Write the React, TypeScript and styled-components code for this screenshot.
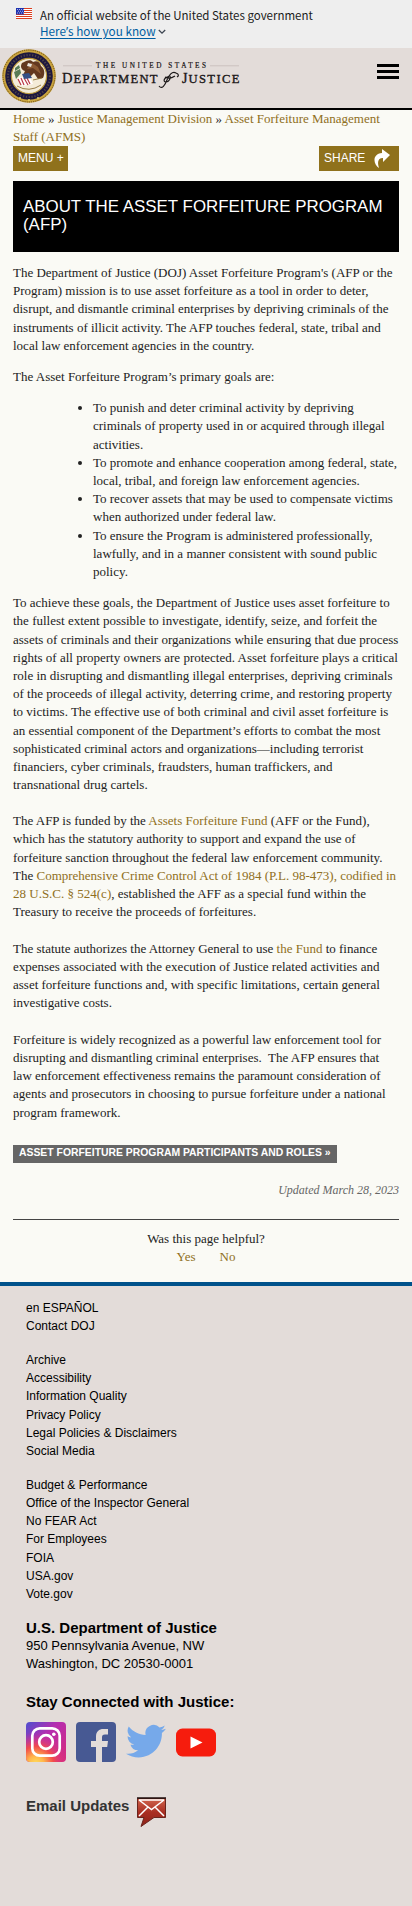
import React from 'react';
import styled, { createGlobalStyle } from 'styled-components';

const Global = createGlobalStyle`
  * { box-sizing: border-box; }
  body { margin: 0; background: #e3dcd9; color: #222; font: 13px/18.2px "Liberation Serif", serif; }
  a { color: inherit; text-decoration: none; }
  svg { display: block; }
`;

const Banner = styled.div`
  height: 48px; background: #eee; color: #1b1b1b; display: flex; padding: 7px 16px 0; gap: 8px;
  font: 11.5px/16px "Noto Sans CJK SC", sans-serif;
  svg { flex: none; margin-top: 1px; }
`;
const BannerText = styled.div` white-space: nowrap; `;
const KnowLink = styled.a`
  display: flex; align-items: center; gap: 2px; color: #005ea2 !important; font-size: 11.75px;
  span { text-decoration: underline; text-underline-offset: 2px; }
`;
const Apostrophe = styled.b` font: 12px/16px "Open Sans", sans-serif; `;
const Header = styled.header`
  height: 62px; background: #e3dcd9; border-bottom: 2px solid #000;
  display: flex; justify-content: space-between; padding: 0 13px 0 0;
`;
const Burger = styled.button`
  width: 22px; height: 15px; margin-top: 16px; padding: 0; border: 0; background: none;
  display: flex; flex-direction: column; justify-content: space-between;
  i { height: 3px; width: 100%; background: #000; }
`;
const Main = styled.main`
  height: 1172px; background: #fafaf5; padding: 0 13px;
  display: flex; flex-direction: column;
`;
const Crumbs = styled.nav` height: 36px; white-space: nowrap; `;
const Link = styled.a` && { color: #8f6f22; } `;
const Tools = styled.div` display: flex; justify-content: space-between; height: 25px; `;
const Tool = styled.button<{ $w: number }>`
  width: ${p => p.$w}px; height: 25px; border: 0; padding: 0 0 0 5px; background: #8f711c; color: #fff;
  display: flex; align-items: center; gap: 8px; font: 12px/25px "Liberation Sans", sans-serif; white-space: nowrap;
`;
const Title = styled.h1`
  margin: 10px 0 12px; height: 71px; padding: 17px 10px; background: #000; color: #fff; white-space: nowrap;
  font: 16.9px/18px "Liberation Sans", sans-serif;
`;
const Para = styled.p<{ $gap?: number }>` margin: 0 0 ${p => p.$gap ?? 13}px; white-space: nowrap; `;
const Goals = styled.ul` margin: 0 0 13px; padding: 0 0 0 80px; white-space: nowrap; `;
const Roles = styled.a`
  align-self: flex-start; margin-top: 5px; width: 324px; height: 18px; padding-left: 6px;
  background: #666; color: #fff !important; font: bold 10.4px/16px "Liberation Sans", sans-serif; white-space: nowrap;
`;
const Updated = styled.div` margin-top: 18px; text-align: right; font-style: italic; font-size: 12px; color: #666; `;
const Helpful = styled.div`
  margin-top: 20px; padding-top: 10px; border-top: 1px solid #444; text-align: center;
`;
const Answers = styled.div` display: flex; justify-content: center; gap: 24px; `;
const Footer = styled.footer`
  height: 624px; border-top: 4px solid #00528b; padding: 13px 26px 0; color: #000;
  font: 12px/18.2px "Liberation Sans", sans-serif;
`;
const Group = styled.div` margin-bottom: 15.6px; a { display: block; } &:nth-of-type(3) { margin-bottom: 15px; } `;
const Heading = styled.h2<{ $soft?: boolean }>`
  margin: 0; font-size: 15px; line-height: 19px; font-weight: bold; color: ${p => (p.$soft ? '#333' : '#000')};
`;
const Address = styled.address` font-style: normal; font-size: 13px; line-height: 18.2px; margin-bottom: 18.5px; `;
const Social = styled.div` display: flex; gap: 10px; margin-top: 11px; height: 40px; `;
const Email = styled.div` display: flex; gap: 8px; margin-top: 34px; svg { margin-top: 1px; } `;

const Flag = () => (
  <svg width="16" height="11" viewBox="0 0 16 11">
    <path fill="#fff" d="M0 0h16v11H0z" />
    <path stroke="#db3e1f" strokeWidth="1" d="M0 .5h16M0 2.5h16M0 4.5h16M0 6.5h16M0 8.5h16M0 10.5h16" />
    <path fill="#1e33b1" d="M0 0h8v6.5H0z" />
    <path stroke="#fff" strokeWidth=".8" strokeDasharray=".8 1.2" d="M1 1.5h7M2 3.2h6M1 5h7" />
  </svg>
);

const Brand = () => (
  <svg width="245" height="60" viewBox="0 0 245 60" role="img">
    <circle cx="29" cy="28" r="26.8" fill="#caa43e" />
    <circle cx="29" cy="28" r="26" fill="none" stroke="#6b4c17" strokeWidth="1" strokeDasharray="1.2 1" />
    <circle cx="29" cy="28" r="23.8" fill="#1d173f" />
    <circle cx="29" cy="28" r="21" fill="none" stroke="#8d7b4d" strokeWidth="2.2" strokeDasharray="1.2 1.7" opacity=".45" />
    <circle cx="29" cy="28" r="17.6" fill="#f4ecd8" stroke="#b99739" strokeWidth="1.2" />
    <path fill="#63381f" d="M22 15c5-3 9-4 11-1 4-2 7 0 8 4 4 3 4 8 2 12l-5 1-4-6-4 4-7-2 2-4c-4-1-5-5-3-8z" />
    <path fill="#8c5a34" d="M32 15l6 4 3 7-8-6-6 1z" />
    <path fill="#e8e4dc" d="M28 15l4 1-1 3-4-1z" />
    <path fill="#587b55" d="M14 24l6-3 1 4-5 6zM15 20l4-3 1 3-5 3z" />
    <path fill="#fff" d="M18 30l11-3 4 9-11 2z" />
    <path stroke="#ba3946" strokeWidth="1.2" d="M18 31l3 6M21 30l3 7M24 30l4 7M27 30l3 6" />
    <path fill="#344f86" d="M22 26l7-1 3 5-8 1z" />
    <path fill="none" stroke="#8d7136" strokeWidth=".9" d="M17 38q12 7 24-1M33 32l9-2" />
    <g fill="#e6cc63"><circle cx="20" cy="50" r="1" /><circle cx="29" cy="52" r="1.1" /><circle cx="38" cy="50" r="1" /></g>
    <path stroke="#c0b6b3" strokeWidth=".7" d="M63 17.8h29M210 17.8h29" />
    <g fill="#1b1718" fontFamily="Liberation Serif, serif">
      <text x="96" y="20.3" fontSize="7.2" textLength="110" stroke="#1b1718" strokeWidth=".2">THE UNITED STATES</text>
      <g stroke="#1b1718" strokeWidth=".35">
        <text x="62" y="35" fontSize="14.5" textLength="10">D</text>
        <text x="73.5" y="35" fontSize="12.6" textLength="84">EPARTMENT</text>
        <text x="182" y="35" fontSize="14">J</text>
        <text x="188.5" y="35" fontSize="12.6" textLength="51">USTICE</text>
      </g>
    </g>
    <path fill="none" stroke="#1b1718" strokeWidth="1.2" d="M169 29c-4-1-7 5-3 5 3 0 5-4 4-6M159 38c3 4 6-1 8-6s5-9 9-7c3 1 3 3 1 4M165 29c3 2 7 1 10-1" />
  </svg>
);

const ShareIcon = () => (
  <svg width="18" height="19" viewBox="0 0 18 19">
    <path fill="#fff" d="M9 0l8 6-7 7V9C5 9 4 13 6 19 0 15-1 5 9 4z" />
  </svg>
);

const Instagram = () => (
  <svg width="40" height="40" viewBox="0 0 40 40">
    <defs>
      <linearGradient id="igBase" x1="0" y1="0" x2="1" y2="1">
        <stop offset="0" stopColor="#4c4fd0" /><stop offset=".4" stopColor="#b52db0" /><stop offset="1" stopColor="#d92b78" />
      </linearGradient>
      <radialGradient id="igGlow" cx=".25" cy="1.05" r=".8">
        <stop offset="0" stopColor="#ffe05c" /><stop offset=".25" stopColor="#ffb64b" /><stop offset=".55" stopColor="#f24b4b" /><stop offset="1" stopColor="#d02c9a" stopOpacity="0" />
      </radialGradient>
    </defs>
    <rect width="40" height="40" rx="4" fill="url(#igBase)" />
    <rect width="40" height="40" rx="4" fill="url(#igGlow)" />
    <g fill="none" stroke="#fff" strokeWidth="2.7">
      <rect x="6.3" y="6.3" width="27.4" height="27.4" rx="7.5" /><circle cx="20" cy="20" r="6.8" />
    </g>
    <circle cx="27.8" cy="12.2" r="1.8" fill="#fff" />
  </svg>
);
const Facebook = () => (
  <svg width="40" height="40" viewBox="0 0 40 40">
    <rect width="40" height="40" rx="4" fill="#475993" />
    <path fill="#e3dcd9" d="M20 40V25h-5v-6h5v-4.5C20 9.5 23 7 27.5 7H32v5.5h-3c-2.4 0-3 1.2-3 3V19h6l-.8 6H26v15z" />
  </svg>
);
const Twitter = () => (
  <svg width="40" height="40" viewBox="0 3 24 19">
    <path fill="#76a9ea" d="M23.95 4.57a10 10 0 0 1-2.82.78 4.96 4.96 0 0 0 2.16-2.73c-.95.56-2 .96-3.13 1.19a4.92 4.92 0 0 0-8.38 4.48C7.69 8.09 4.07 6.13 1.64 3.16a4.92 4.92 0 0 0 1.52 6.57 4.9 4.9 0 0 1-2.23-.61v.06a4.92 4.92 0 0 0 3.95 4.83 5 5 0 0 1-2.21.08 4.94 4.94 0 0 0 4.6 3.42A9.87 9.87 0 0 1 0 19.54a14 14 0 0 0 7.55 2.21c9.05 0 14-7.5 14-13.98 0-.21 0-.42-.02-.63a9.94 9.94 0 0 0 2.42-2.57z" />
  </svg>
);
const Youtube = () => (
  <svg width="40" height="40" viewBox="0 0 40 40">
    <rect y="6.5" width="40" height="28" rx="6.5" fill="#f61c0d" />
    <path fill="#fff" d="M14.500 14.500v12l12-6z" />
  </svg>
);
const Mail = () => (
  <svg width="30" height="31" viewBox="0 0 30 31">
    <defs>
      <linearGradient id="mailRed" x1="0" y1="0" x2="0" y2="1">
        <stop offset="0" stopColor="#d0654e" /><stop offset=".5" stopColor="#a92e22" /><stop offset="1" stopColor="#8c2118" />
      </linearGradient>
    </defs>
    <path fill="url(#mailRed)" stroke="#69251e" d="M.5 1.5h28v19H17L4 29.5l3-9H.5z" />
    <path stroke="#1f0f0e" strokeWidth="1.5" d="M0 1h29" />
    <path fill="none" stroke="#fff" strokeWidth="1.5" d="M2 3l12.5 9.5L27 3M2 19l9-9M27 19l-9-9M2 3h25" />
  </svg>
);

const groups = [
  ['en ESPAÑOL', 'Contact DOJ'],
  ['Archive', 'Accessibility', 'Information Quality', 'Privacy Policy', 'Legal Policies & Disclaimers', 'Social Media'],
  ['Budget & Performance', 'Office of the Inspector General', 'No FEAR Act', 'For Employees', 'FOIA', 'USA.gov', 'Vote.gov'],
];

export default function App() {
  return (
    <>
      <Global />
      <Banner>
        <Flag />
        <BannerText>
          An official website of the United States government
          <KnowLink href="#">
            <span>Here<Apostrophe>’</Apostrophe>s how you know</span>
            <svg width="8" height="6" viewBox="0 0 8 6"><path d="M.8 1l3.2 3.2L7.2 1" fill="none" stroke="#3d4551" strokeWidth="1.3" /></svg>
          </KnowLink>
        </BannerText>
      </Banner>
      <Header>
        <Brand />
        <Burger aria-label="Menu"><i /><i /><i /></Burger>
      </Header>
      <Main>
        <Crumbs>
          <Link href="#">Home</Link> » <Link href="#">Justice Management Division</Link> » <Link href="#">Asset Forfeiture Management<br />Staff (AFMS)</Link>
        </Crumbs>
        <Tools>
          <Tool $w={55}>MENU +</Tool>
          <Tool $w={80}>SHARE <ShareIcon /></Tool>
        </Tools>
        <Title>ABOUT THE ASSET FORFEITURE PROGRAM<br />(AFP)</Title>
        <Para>
          The Department of Justice (DOJ) Asset Forfeiture Program's (AFP or the<br />
          Program) mission is to use asset forfeiture as a tool in order to deter,<br />
          disrupt, and dismantle criminal enterprises by depriving criminals of the<br />
          instruments of illicit activity. The AFP touches federal, state, tribal and<br />
          local law enforcement agencies in the country.
        </Para>
        <Para>The Asset Forfeiture Program’s primary goals are:</Para>
        <Goals>
          <li>To punish and deter criminal activity by depriving<br />criminals of property used in or acquired through illegal<br />activities.</li>
          <li>To promote and enhance cooperation among federal, state,<br />local, tribal, and foreign law enforcement agencies.</li>
          <li>To recover assets that may be used to compensate victims<br />when authorized under federal law.</li>
          <li>To ensure the Program is administered professionally,<br />lawfully, and in a manner consistent with sound public<br />policy.</li>
        </Goals>
        <Para $gap={17.8}>
          To achieve these goals, the Department of Justice uses asset forfeiture to<br />
          the fullest extent possible to investigate, identify, seize, and forfeit the<br />
          assets of criminals and their organizations while ensuring that due process<br />
          rights of all property owners are protected. Asset forfeiture plays a critical<br />
          role in disrupting and dismantling illegal enterprises, depriving criminals<br />
          of the proceeds of illegal activity, deterring crime, and restoring property<br />
          to victims. The effective use of both criminal and civil asset forfeiture is<br />
          an essential component of the Department’s efforts to combat the most<br />
          sophisticated criminal actors and organizations—including terrorist<br />
          financiers, cyber criminals, fraudsters, human traffickers, and<br />
          transnational drug cartels.
        </Para>
        <Para $gap={18.2}>
          The AFP is funded by the <Link href="#">Assets Forfeiture Fund</Link> (AFF or the Fund),<br />
          which has the statutory authority to support and expand the use of<br />
          forfeiture sanction throughout the federal law enforcement community.<br />
          The <Link href="#">Comprehensive Crime Control Act of 1984 (P.L. 98-473), codified in<br />28 U.S.C. § 524(c)</Link>, established the AFF as a special fund within the<br />
          Treasury to receive the proceeds of forfeitures.
        </Para>
        <Para $gap={18.2}>
          The statute authorizes the Attorney General to use <Link href="#">the Fund</Link> to finance<br />
          expenses associated with the execution of Justice related activities and<br />
          asset forfeiture functions and, with specific limitations, certain general<br />
          investigative costs.
        </Para>
        <Para $gap={18.2}>
          Forfeiture is widely recognized as a powerful law enforcement tool for<br />
          disrupting and dismantling criminal enterprises.&nbsp; The AFP ensures that<br />
          law enforcement effectiveness remains the paramount consideration of<br />
          agents and prosecutors in choosing to pursue forfeiture under a national<br />
          program framework.
        </Para>
        <Roles href="#">ASSET FORFEITURE PROGRAM PARTICIPANTS AND ROLES »</Roles>
        <Updated>Updated March 28, 2023</Updated>
        <Helpful>
          Was this page helpful?
          <Answers><Link href="#">Yes</Link><Link href="#">No</Link></Answers>
        </Helpful>
      </Main>
      <Footer>
        {groups.map(items => (
          <Group key={items[0]}>{items.map(t => <a href="#" key={t}>{t}</a>)}</Group>
        ))}
        <Heading>U.S. Department of Justice</Heading>
        <Address>950 Pennsylvania Avenue, NW<br />Washington, DC 20530-0001</Address>
        <Heading>Stay Connected with Justice:</Heading>
        <Social><Instagram /><Facebook /><Twitter /><Youtube /></Social>
        <Email><Heading as="h3" $soft>Email Updates</Heading><Mail /></Email>
      </Footer>
    </>
  );
}
